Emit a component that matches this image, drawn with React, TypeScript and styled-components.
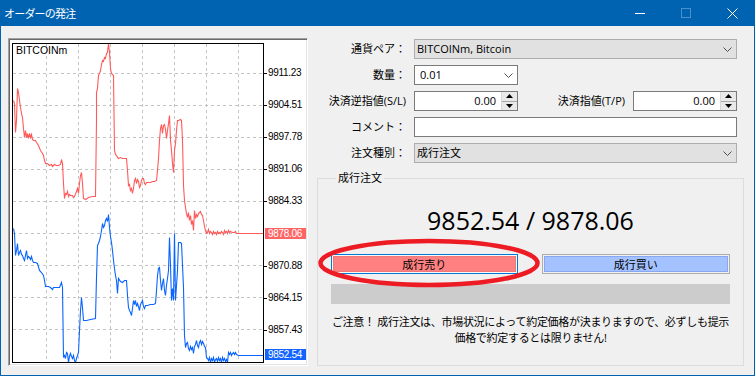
import React from "react";
import styled, { createGlobalStyle } from "styled-components";

const UI_FONT = `"Open Sans", "Noto Sans CJK JP", sans-serif`;

const GlobalStyle = createGlobalStyle`
  html, body {
    margin: 0;
    padding: 0;
    background: #f0f0f0;
  }
  body {
    font-family: ${UI_FONT};
    color: #000;
  }
`;

// Window chrome
const Window = styled.div`
  width: 755px;
  height: 376px;
  box-sizing: border-box;
  border: 1px solid #0063b1;
  border-top: none;
  background: #f0f0f0;
  display: flex;
  flex-direction: column;
  overflow: hidden;
`;

const TitleBar = styled.div`
  height: 26px;
  flex-shrink: 0;
  background: #0063b1;
  display: flex;
  align-items: center;
  margin: 0 -1px;
`;

const Title = styled.div`
  flex: 1;
  padding-left: 4px;
  color: #fff;
  font: 11px/26px "Noto Sans CJK JP", sans-serif;
  letter-spacing: -0.8px;
`;

const CaptionButton = styled.div`
  width: 46px;
  height: 26px;
  display: flex;
  align-items: center;
  justify-content: center;
`;

const Body = styled.div`
  flex: 1;
  display: flex;
  padding: 12px 0 0 7px;
`;

// Chart panel
const ChartFrame = styled.div`
  width: 300px;
  height: 328px;
  box-sizing: border-box;
  flex-shrink: 0;
  background: #fff;
  border: 1px solid;
  border-color: #a0a0a0 #ffffff #ffffff #a0a0a0;
  box-shadow: inset 1px 1px 0 #696969, inset -1px -1px 0 #e3e3e3;
  padding: 4px 0 2px 3px;
  display: flex;
  overflow: hidden;
`;

const Plot = styled.div`
  width: 250px;
  height: 318px;
  flex-shrink: 0;
  border: 1px solid #000;
  overflow: hidden;
  svg {
    display: block;
  }
`;

const Axis = styled.div`
  position: relative;
  flex: 1;
  overflow: hidden;
`;

const AXIS_TOP = 43;

const AxisLabel = styled.div<{ $y: number }>`
  position: absolute;
  left: 4px;
  top: ${({ $y }) => $y - AXIS_TOP - 6}px;
  font: 10px/12px "Liberation Sans", Arial, sans-serif;
  letter-spacing: -0.3px;
  white-space: nowrap;
  &::before {
    content: "";
    position: absolute;
    left: -4px;
    top: 6px;
    width: 3px;
    height: 1px;
    background: #000;
  }
`;

const PriceTag = styled.div<{ $y: number; $bg: string }>`
  position: absolute;
  z-index: 1;
  left: 1px;
  top: ${({ $y }) => $y - AXIS_TOP - 5}px;
  width: 38px;
  height: 11px;
  padding-left: 3px;
  background: ${({ $bg }) => $bg};
  color: #fff;
  font: 10px/11px "Liberation Sans", Arial, sans-serif;
  letter-spacing: -0.3px;
  white-space: nowrap;
`;

// Order form
const Panel = styled.div`
  width: 428px;
  margin-left: 8px;
  padding-top: 1px;
  display: flex;
  flex-direction: column;
`;

const Row = styled.div`
  display: flex;
  align-items: center;
  height: 20px;
  margin-bottom: 6px;
  padding-right: 7px;
`;

const Label = styled.div`
  width: 90px;
  margin-right: 8px;
  flex-shrink: 0;
  text-align: right;
  font-size: 11px;
  line-height: 20px;
  white-space: nowrap;
`;

const SideLabel = styled(Label)`
  width: auto;
  flex: 1;
`;

const Field = styled.div<{ $gray?: boolean; $width?: number }>`
  box-sizing: border-box;
  height: 20px;
  ${({ $width }) => ($width ? `width: ${$width}px; flex-shrink: 0;` : "flex: 1;")}
  background: ${({ $gray }) => ($gray ? "#e1e1e1" : "#ffffff")};
  border: 1px solid ${({ $gray }) => ($gray ? "#adadad" : "#7a7a7a")};
  display: flex;
  align-items: center;
  font-size: 11px;
  line-height: 18px;
`;

const FieldText = styled.div<{ $right?: boolean; $inset?: number }>`
  flex: 1;
  padding: 0 ${({ $right }) => ($right ? "5px" : "0")} 0
    ${({ $right, $inset }) => ($right ? 0 : $inset ?? 2)}px;
  text-align: ${({ $right }) => ($right ? "right" : "left")};
  white-space: nowrap;
`;

const Chevron = styled.div`
  width: 18px;
  display: flex;
  justify-content: center;
  svg {
    display: block;
  }
`;

const Spinner = styled.div`
  width: 15px;
  height: 18px;
  display: flex;
  flex-direction: column;
  border-left: 1px solid #d6d6d6;
`;

const SpinHalf = styled.div`
  flex: 1;
  display: flex;
  align-items: center;
  justify-content: center;
  background: #e9e9e9;
  & + & {
    border-top: 1px solid #a8a8a8;
  }
  svg {
    display: block;
  }
`;

const Group = styled.fieldset`
  margin: 1px 0 0 1px;
  padding: 0 13px;
  height: 196px;
  box-sizing: border-box;
  border: 1px solid #dcdcdc;
  min-width: 0;
`;

const Legend = styled.legend`
  margin-left: 5px;
  padding: 0 2px;
  font-size: 11px;
  line-height: 16px;
`;

const Quote = styled.div`
  margin-top: 19px;
  text-align: center;
  font: 25px/30px "Open Sans", sans-serif;
`;

const Buttons = styled.div`
  margin-top: 19px;
  display: flex;
  gap: 24px;
`;

const SellWrap = styled.div`
  position: relative;
  flex: 1;
  display: flex;
`;

const OrderButton = styled.div<{ $side: "sell" | "buy" }>`
  flex: 1;
  height: 20px;
  box-sizing: border-box;
  display: flex;
  align-items: center;
  justify-content: center;
  font-size: 11px;
  border: 1px solid ${({ $side }) => ($side === "sell" ? "#0078d7" : "#adadad")};
  background: ${({ $side }) => ($side === "sell" ? "#ff8080" : "#a4c2ff")};
  box-shadow: ${({ $side }) =>
    $side === "sell"
      ? "inset 0 0 0 1px #f8f8f8, inset 0 0 0 2px #f07878"
      : "inset 0 0 0 1px #f0f0f0, inset 0 0 0 2px #86a8f4"};
`;

const Ring = styled.svg`
  position: absolute;
  left: -15px;
  top: -17px;
  pointer-events: none;
`;

const Progress = styled.div`
  margin-top: 10px;
  height: 20px;
  background: #cccccc;
`;

const Note = styled.div`
  margin-top: 10px;
  text-align: center;
  font-size: 11px;
  line-height: 16px;
  letter-spacing: -0.3px;
  white-space: nowrap;
`;

// Tick data, drawn in page pixel coordinates of the plot
const ask: [number, number][] = [
  [13, 100], [14, 103], [15, 132], [16, 120], [17, 88], [18, 92], [19, 100], [20, 107],
  [21, 113], [22, 117], [23, 128], [24, 137], [25, 130], [26, 137], [27, 133], [28, 138],
  [29, 133], [30, 137], [31, 134], [32, 139], [33, 140], [35, 140], [36, 142], [38, 145],
  [40, 150], [42, 153], [43, 155], [44, 160], [45, 163], [47, 163], [49, 165], [51, 164],
  [52, 166], [54, 164], [56, 165], [58, 165], [60, 164], [61, 159], [62, 163], [63, 183],
  [64, 198], [65, 193], [66, 194], [67, 191], [68, 196], [69, 194], [70, 195], [72, 195],
  [73, 197], [74, 196], [76, 191], [77, 188], [78, 193], [79, 183], [80, 175], [81, 172],
  [82, 183], [83, 198], [85, 199], [88, 197], [92, 196], [95, 196], [96, 120], [96, 92],
  [97, 88], [98, 75], [99, 73], [100, 70], [101, 64], [102, 60], [103, 61], [104, 57],
  [105, 58], [106, 53], [107, 52], [108, 43], [109, 52], [110, 68], [111, 73], [112, 74],
  [113, 75], [114, 150], [115, 154], [116, 155], [117, 157], [118, 158], [120, 157],
  [122, 158], [124, 158], [126, 158], [127, 170], [128, 185], [129, 184], [130, 190],
  [131, 188], [132, 193], [133, 188], [134, 180], [135, 178], [136, 183], [137, 179],
  [138, 181], [139, 187], [140, 185], [141, 180], [142, 178], [143, 178], [144, 183],
  [145, 184], [146, 182], [148, 182], [150, 182], [152, 181], [154, 181], [156, 180],
  [157, 170], [158, 158], [159, 140], [160, 128], [161, 124], [162, 133], [163, 125],
  [164, 124], [165, 129], [166, 138], [167, 130], [168, 123], [169, 115], [170, 140],
  [171, 150], [172, 163], [173, 172], [174, 150], [175, 143], [176, 130], [177, 120],
  [178, 120], [180, 119], [181, 120], [182, 140], [183, 185], [184, 200], [185, 207],
  [186, 213], [187, 217], [188, 212], [189, 220], [190, 215], [191, 224], [192, 220],
  [193, 230], [194, 210], [195, 218], [196, 214], [197, 216], [198, 213], [199, 212],
  [200, 211], [201, 214], [202, 215], [203, 220], [204, 226], [205, 230], [206, 233],
  [207, 232], [208, 229], [209, 233], [210, 231], [211, 232], [212, 234], [213, 231],
  [214, 233], [215, 232], [216, 234], [217, 231], [218, 233], [219, 232], [220, 233],
  [221, 231], [222, 232], [223, 234], [224, 230], [225, 232], [226, 231], [227, 233],
  [228, 230], [229, 232], [230, 231], [232, 232], [234, 232], [235, 231], [236, 233],
  [238, 233], [264, 233],
];

const bid: [number, number][] = [
  [13, 228], [14, 233], [15, 255], [16, 250], [17, 243], [18, 255], [19, 252], [20, 250],
  [21, 254], [22, 255], [23, 258], [24, 260], [25, 255], [26, 250], [27, 258], [28, 256],
  [29, 257], [30, 259], [31, 256], [32, 260], [33, 262], [35, 262], [37, 263], [39, 270],
  [41, 272], [43, 275], [44, 280], [45, 286], [48, 286], [50, 287], [52, 289], [53, 287],
  [56, 287], [59, 287], [61, 282], [62, 287], [63, 357], [64, 355], [65, 358], [66, 352],
  [67, 353], [68, 362], [69, 356], [70, 353], [71, 356], [72, 358], [73, 355], [74, 360],
  [75, 362], [76, 358], [77, 355], [78, 352], [79, 330], [80, 310], [81, 297], [82, 307],
  [83, 320], [86, 320], [90, 319], [95, 318], [96, 277], [97, 245], [98, 243], [99, 240],
  [100, 236], [101, 230], [102, 223], [103, 227], [104, 225], [105, 220], [106, 218],
  [107, 221], [108, 214], [109, 227], [110, 236], [111, 242], [112, 250], [113, 260],
  [114, 268], [115, 275], [116, 280], [117, 293], [118, 278], [120, 281], [122, 282],
  [124, 280], [126, 280], [127, 295], [128, 307], [129, 310], [130, 312], [131, 315],
  [132, 308], [133, 300], [134, 304], [135, 300], [136, 306], [137, 303], [138, 306],
  [139, 310], [140, 304], [141, 302], [142, 300], [143, 306], [144, 308], [145, 305],
  [147, 305], [150, 304], [153, 304], [155, 303], [156, 290], [157, 275], [158, 268],
  [159, 267], [160, 280], [161, 290], [162, 283], [163, 278], [164, 290], [165, 295],
  [166, 285], [167, 278], [168, 270], [169, 237], [170, 265], [171, 300], [172, 288],
  [173, 300], [174, 233], [175, 300], [176, 285], [177, 270], [178, 242], [180, 242],
  [181, 243], [182, 265], [183, 287], [184, 335], [185, 347], [186, 343], [187, 342],
  [188, 348], [189, 350], [190, 346], [191, 349], [192, 347], [193, 353], [194, 346],
  [195, 344], [196, 340], [197, 345], [198, 347], [199, 342], [200, 340], [201, 344],
  [202, 341], [203, 343], [204, 346], [205, 347], [206, 357], [207, 358], [208, 360],
  [209, 357], [210, 362], [211, 358], [212, 360], [213, 357], [214, 362], [215, 359],
  [216, 358], [217, 361], [218, 357], [219, 360], [220, 358], [221, 362], [222, 357],
  [223, 360], [224, 358], [225, 361], [226, 359], [227, 362], [228, 352], [229, 354],
  [230, 352], [231, 355], [232, 353], [233, 352], [234, 354], [235, 352], [236, 354],
  [238, 355], [264, 355],
];

const toPoints = (ticks: [number, number][]) =>
  ticks.map(([x, y]) => `${x},${y}`).join(" ");

const gridX = [46, 78, 110, 142, 174, 206, 238];
const gridY = [73, 105, 137, 169, 201, 233, 265, 297, 329];

const levels = [
  { y: 73, text: "9911.23" },
  { y: 105, text: "9904.51" },
  { y: 137, text: "9897.78" },
  { y: 169, text: "9891.06" },
  { y: 201, text: "9884.33" },
  { y: 266, text: "9870.88" },
  { y: 298, text: "9864.15" },
  { y: 330, text: "9857.43" },
];

const ChevronIcon = () => (
  <svg width="9" height="5" viewBox="0 0 9 5">
    <polyline points="0.5,0.5 4.5,4.5 8.5,0.5" fill="none" stroke="#505050" strokeWidth="1" />
  </svg>
);

const SpinBox = ({ value, width }: { value: string; width: number }) => (
  <Field $width={width}>
    <FieldText $right>{value}</FieldText>
    <Spinner>
      <SpinHalf>
        <svg width="7" height="4" viewBox="0 0 7 4">
          <polygon points="0,4 3.5,0 7,4" fill="#000" />
        </svg>
      </SpinHalf>
      <SpinHalf>
        <svg width="7" height="4" viewBox="0 0 7 4">
          <polygon points="0,0 3.5,4 7,0" fill="#000" />
        </svg>
      </SpinHalf>
    </Spinner>
  </Field>
);

const PriceChart = () => (
  <ChartFrame>
    <Plot>
      <svg width="250" height="318" viewBox="13 44 250 318">
        <g stroke="#c4c4c4" strokeWidth="1" strokeDasharray="3 3" shapeRendering="crispEdges">
          {gridX.map((x) => (
            <line key={`x${x}`} x1={x + 0.5} y1={44} x2={x + 0.5} y2={362} />
          ))}
          {gridY.map((y) => (
            <line key={`y${y}`} x1={13} y1={y + 0.5} x2={263} y2={y + 0.5} />
          ))}
        </g>
        <g fill="none" strokeWidth="1.1" transform="translate(0.5 0.5)">
          <polyline points={toPoints(ask)} stroke="#ff5a5a" />
          <polyline points={toPoints(bid)} stroke="#0a64ff" />
        </g>
        <text x="16" y="54" fontFamily="'Liberation Sans', Arial, sans-serif" fontSize="10.5" fill="#000">
          BITCOINm
        </text>
      </svg>
    </Plot>
    <Axis>
      {levels.map((l) => (
        <AxisLabel key={l.text} $y={l.y}>
          {l.text}
        </AxisLabel>
      ))}
      <PriceTag $y={233} $bg="#ff6464">9878.06</PriceTag>
      <PriceTag $y={354} $bg="#1464ff">9852.54</PriceTag>
    </Axis>
  </ChartFrame>
);

export default function App() {
  return (
    <>
      <GlobalStyle />
      <Window>
        <TitleBar>
          <Title>オーダーの発注</Title>
          <CaptionButton>
            <svg width="10" height="10" viewBox="0 0 10 10">
              <line x1="0" y1="5.5" x2="10" y2="5.5" stroke="#fff" strokeWidth="1" />
            </svg>
          </CaptionButton>
          <CaptionButton>
            <svg width="10" height="10" viewBox="0 0 10 10">
              <rect x="0.5" y="0.5" width="9" height="9" fill="none" stroke="#4d8ecb" strokeWidth="1" />
            </svg>
          </CaptionButton>
          <CaptionButton>
            <svg width="11" height="11" viewBox="0 0 11 11">
              <path d="M0.5 0.5 L10.5 10.5 M10.5 0.5 L0.5 10.5" stroke="#fff" strokeWidth="1" />
            </svg>
          </CaptionButton>
        </TitleBar>

        <Body>
          <PriceChart />

          <Panel>
            <Row>
              <Label>通貨ペア：</Label>
              <Field $gray>
                <FieldText>BITCOINm, Bitcoin</FieldText>
                <Chevron>
                  <ChevronIcon />
                </Chevron>
              </Field>
            </Row>
            <Row>
              <Label>数量：</Label>
              <Field $width={104}>
                <FieldText $inset={5}>0.01</FieldText>
                <Chevron>
                  <ChevronIcon />
                </Chevron>
              </Field>
            </Row>
            <Row>
              <Label>決済逆指値(S/L)</Label>
              <SpinBox value="0.00" width={104} />
              <SideLabel>決済指値(T/P)</SideLabel>
              <SpinBox value="0.00" width={104} />
            </Row>
            <Row>
              <Label>コメント：</Label>
              <Field />
            </Row>
            <Row>
              <Label>注文種別：</Label>
              <Field $gray>
                <FieldText>成行注文</FieldText>
                <Chevron>
                  <ChevronIcon />
                </Chevron>
              </Field>
            </Row>

            <Group>
              <Legend>成行注文</Legend>
              <Quote>9852.54 / 9878.06</Quote>
              <Buttons>
                <SellWrap>
                  <OrderButton $side="sell">成行売り</OrderButton>
                  <Ring width="226" height="52" viewBox="0 0 226 52">
                    <ellipse cx="113" cy="26" rx="108.5" ry="22" fill="none" stroke="#ed1c24" strokeWidth="4.5" />
                  </Ring>
                </SellWrap>
                <OrderButton $side="buy">成行買い</OrderButton>
              </Buttons>
              <Progress />
              <Note>
                ご注意！ 成行注文は、市場状況によって約定価格が決まりますので、必ずしも提示
                <br />
                価格で約定するとは限りません!
              </Note>
            </Group>
          </Panel>
        </Body>
      </Window>
    </>
  );
}
